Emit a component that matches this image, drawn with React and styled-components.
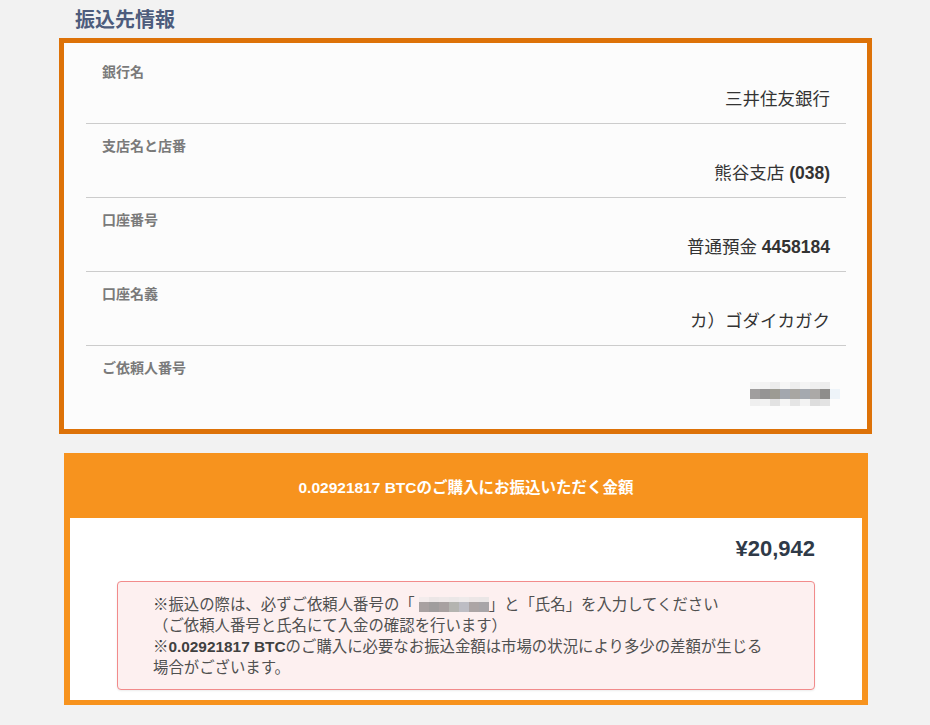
import React from "react";
import styled, { createGlobalStyle } from "styled-components";

const Global = createGlobalStyle`
  html, body { margin: 0; padding: 0; background: #f2f2f2; }
  body {
    font-family: "Liberation Sans", Arial, "Noto Sans CJK JP", sans-serif;
    color: #333;
  }
`;

const Page = styled.div`
  width: 930px;
  min-height: 725px;
  box-sizing: border-box;
  padding: 6px 0 0 0;
`;

const Title = styled.h2`
  margin: 0 0 4px 75px;
  font-size: 20px;
  line-height: 28px;
  font-weight: 700;
  color: #4d5c7c;
`;

const InfoBox = styled.section`
  margin-left: 59px;
  width: 813px;
  box-sizing: border-box;
  border: 5px solid #dd7208;
  background: #fcfcfc;
  padding: 7px 21px 12px 22px;
`;

const Row = styled.div`
  display: flex;
  flex-direction: column;
  padding: 12px 16px 11px;
  border-bottom: ${(p) => (p.$last ? "none" : "1px solid #cccccc")};
`;

const Label = styled.div`
  font-size: 14px;
  line-height: 20px;
  font-weight: 700;
  color: #7a7a7a;
`;

const Value = styled.div`
  margin-top: 4px;
  font-size: 17.5px;
  line-height: 26px;
  color: #333;
  display: flex;
  justify-content: flex-end;
  align-items: center;
  white-space: nowrap;
  b { font-weight: 700; }
`;

const MosaicSvg = styled.svg`
  display: block;
  flex: none;
  margin-right: ${(p) => p.$mr || 0}px;
  margin-left: ${(p) => p.$ml || 0}px;
`;

const Mosaic = ({ cells, cw, rows, mr = 0, ml = 0 }) => {
  const width = cells[0].length * cw;
  const height = rows.reduce((a, b) => a + b, 0);
  let y = 0;
  const rects = [];
  cells.forEach((row, ri) => {
    row.forEach((c, ci) => {
      if (c) rects.push(<rect key={ri + "-" + ci} x={ci * cw} y={y} width={cw} height={rows[ri]} fill={c} />);
    });
    y += rows[ri];
  });
  return (
    <MosaicSvg width={width} height={height} viewBox={`0 0 ${width} ${height}`} $mr={mr} $ml={ml}>
      {rects}
    </MosaicSvg>
  );
};

const topMosaic = [
  ["#f5f5f5", "#f3f3f3", "#ececec", "#f6f6f6", "#eeeeee", "#f4f4f4", "#efefef", "#ededed", null],
  ["#a09e9e", "#959494", "#9c9b93", "#a3a7ae", "#a8a6a2", "#a5a9af", "#aba9a7", "#8e8d8b", "#eef4f9"],
  ["#efefef", "#f2f2f2", "#e2e2e2", "#f5f5f5", "#e5e5e5", "#f3f3f3", "#dddddd", "#e3e3e3", null],
];

const alertMosaic = [
  ["#f3ecec", "#ece6e6", "#eee8e8", "#ebe7e7", "#eeeaea", "#ece6e6", "#eae6e6"],
  ["#a8a1a1", "#a09d9d", "#a8a1a1", "#b4b4b0", "#bdbdc4", "#aca5a5", "#a8a5a8"],
];

const PayBox = styled.section`
  margin: 19px 0 0 64px;
  width: 804px;
  box-sizing: border-box;
  background: #f7931e;
  padding: 0 6px 5px;
`;

const PayHeader = styled.div`
  height: 65px;
  display: flex;
  align-items: center;
  justify-content: center;
  color: #fff;
  font-size: 15.5px;
  font-weight: 700;
`;

const PayBody = styled.div`
  background: #fff;
  padding: 16px 47px 10px;
`;

const Amount = styled.div`
  text-align: right;
  font-size: 22px;
  line-height: 30px;
  font-weight: 700;
  color: #2f3a48;
`;

const Alert = styled.div`
  margin-top: 17px;
  background: #fdf0f0;
  border: 1px solid #f28b8b;
  border-radius: 4px;
  box-shadow: 0 1px 2px rgba(0, 0, 0, 0.08);
  padding: 12px 20px 11px 35px;
  font-size: 15.4px;
  line-height: 21px;
  color: #505050;
  white-space: nowrap;
`;

const Line = styled.div`
  display: flex;
  align-items: center;
  b { font-weight: 700; color: #404040; }
`;

const rows = [
  { label: "銀行名", value: <>三井住友銀行</> },
  { label: "支店名と店番", value: <>熊谷支店&nbsp;<b>(038)</b></> },
  { label: "口座番号", value: <>普通預金&nbsp;<b>4458184</b></> },
  { label: "口座名義", value: <>カ）ゴダイカガク</> },
  {
    label: "ご依頼人番号",
    value: <Mosaic cells={topMosaic} cw={10} rows={[7, 10, 7]} mr={-10} />,
  },
];

export default function App() {
  return (
    <Page>
      <Global />
      <Title>振込先情報</Title>
      <InfoBox>
        {rows.map((r, i) => (
          <Row key={r.label} $last={i === rows.length - 1}>
            <Label>{r.label}</Label>
            <Value>{r.value}</Value>
          </Row>
        ))}
      </InfoBox>
      <PayBox>
        <PayHeader>0.02921817 BTCのご購入にお振込いただく金額</PayHeader>
        <PayBody>
          <Amount>¥20,942</Amount>
          <Alert>
            <Line>
              <b>※</b>振込の際は、必ずご依頼人番号の「
              <Mosaic cells={alertMosaic} cw={10} rows={[5, 10]} ml={4} />
              」と「氏名」を入力してください
            </Line>
            <Line>（ご依頼人番号と氏名にて入金の確認を行います）</Line>
            <Line>
              <b>※0.02921817 BTC</b>のご購入に必要なお振込金額は市場の状況により多少の差額が生じる
            </Line>
            <Line>場合がございます。</Line>
          </Alert>
        </PayBody>
      </PayBox>
    </Page>
  );
}
